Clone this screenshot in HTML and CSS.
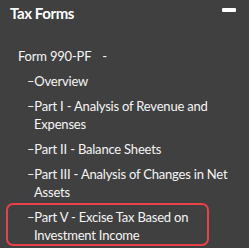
FILE: index.html
```html
<!DOCTYPE html>
<html lang="en">
<head>
    <meta charset="UTF-8">
    <title>Tax Forms</title>
    <link rel="stylesheet" href="styles.css">
</head>
<body>
    <div class="panel">
        <div class="panel-header">
            <span class="panel-title">Tax Forms</span>
            <span class="collapse-icon"></span>
        </div>

        <div class="form-name">Form 990-PF <span class="form-dash">-</span></div>
        <ul class="part-list">
            <li><a href="#">–Overview</a></li>
            <li><a href="#">–Part I - Analysis of Revenue and Expenses</a></li>
            <li><a href="#">–Part II - Balance Sheets</a></li>
            <li><a href="#">–Part III - Analysis of Changes in Net Assets</a></li>
            <li class="active"><a href="#">–Part V - Excise Tax Based on Investment Income</a></li>
        </ul>
    </div>
</body>
</html>
```

FILE: styles.css
```css
body {
    margin: 0;
    background-color: #404040;
    color: #f5f5f5;
    font-family: 'Lato', 'Noto Sans', sans-serif;
}

.panel {
    width: 249px;
    height: 248px;
    overflow: hidden;
}

.panel-header {
    display: flex;
    justify-content: space-between;
    align-items: flex-start;
    padding: 2px 13px 0 10px;
}

.panel-title {
    font-size: 15px;
    line-height: 22px;
    font-weight: bold;
    letter-spacing: -0.4px;
    color: #ffffff;
}

.collapse-icon {
    width: 14px;
    height: 4.5px;
    margin-top: 5.5px;
    background-color: #ffffff;
    border-radius: 1px;
}

.form-name {
    margin-top: 23px;
    padding-left: 18px;
    font-size: 13px;
    line-height: 18px;
    letter-spacing: -0.2px;
}

.form-dash {
    margin-left: 8px;
}

.part-list {
    list-style: none;
    margin: 7px 0 0 0;
    padding: 0;
    display: flex;
    flex-direction: column;
    gap: 7px;
}

.part-list li {
    padding: 0 8px 0 27px;
}

.part-list a {
    display: block;
    color: #f5f5f5;
    text-decoration: none;
    font-size: 13px;
    line-height: 18px;
    letter-spacing: -0.2px;
    padding-left: 7px;
    text-indent: -7px;
}

.part-list li.active {
    width: 180px;
    margin: -5px 0 0 6px;
    padding: 3px 0 0 19px;
    border: 2.5px solid #ea4148;
    border-radius: 7px;
}
```
